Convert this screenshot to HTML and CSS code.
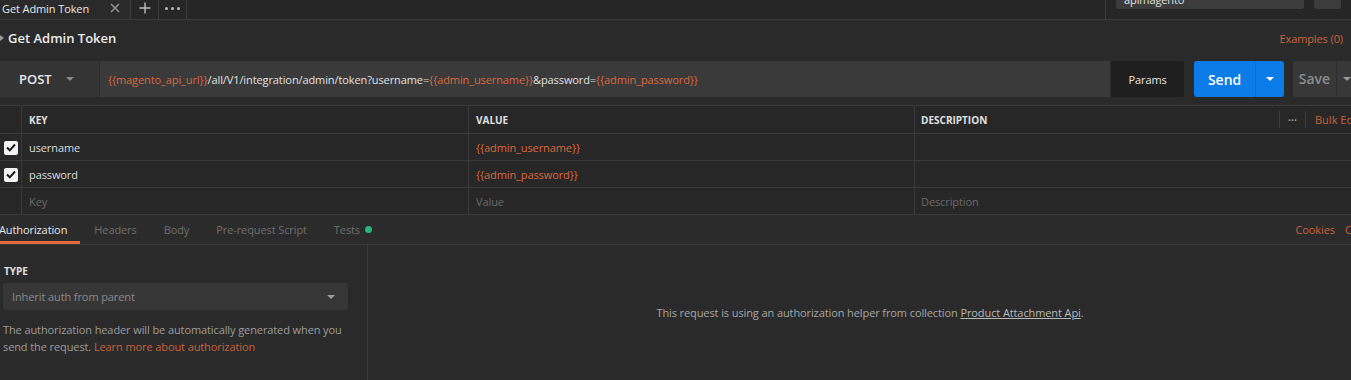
FILE: index.html
```html
<!DOCTYPE html>
<html>
<head>
<meta charset="utf-8">
<link rel="stylesheet" href="styles.css">
</head>
<body>
<div class="topbar">
  <div class="tab">
    <span class="tab-name">Get Admin Token</span>
    <svg class="tab-close" width="10" height="10" viewBox="0 0 10 10"><path d="M1 1L9 9M9 1L1 9" stroke="#9a9a9a" stroke-width="1.4"/></svg>
  </div>
  <div class="tab-btn">
    <svg width="12" height="12" viewBox="0 0 12 12"><path d="M6 0.5V11.5M0.5 6H11.5" stroke="#bdbdbd" stroke-width="1.4"/></svg>
  </div>
  <div class="tab-btn dots">
    <span></span><span></span><span></span>
  </div>
  <div class="spacer"></div>
  <div class="env-area">
    <div class="env-select">apimagento</div>
    <div class="env-btn"></div>
  </div>
</div>

<div class="title-row">
  <div class="title"><span class="caret"></span>Get Admin Token</div>
  <div class="examples">Examples (0)</div>
</div>

<div class="url-row">
  <div class="method">POST <span class="tri"></span></div>
  <div class="url"><span class="var">{{magento_api_url}}</span>/all/V1/integration/admin/token?username=<span class="var">{{admin_username}}</span>&amp;password=<span class="var">{{admin_password}}</span></div>
  <div class="params">Params</div>
  <div class="send"><span class="send-label">Send</span><span class="send-drop"><span class="tri white"></span></span></div>
  <div class="save"><span class="save-label">Save</span><span class="tri grey"></span></div>
</div>

<div class="table">
  <div class="row head">
    <div class="c-check"></div>
    <div class="c-key">KEY</div>
    <div class="c-val">VALUE</div>
    <div class="c-desc">DESCRIPTION
      <div class="head-tools"><span class="sep"></span><span class="more">•••</span><span class="sep"></span><span class="bulk">Bulk Edit</span></div>
    </div>
  </div>
  <div class="row">
    <div class="c-check"><span class="cb"><svg width="10" height="9" viewBox="0 0 10 9"><path d="M1 4.5L3.8 7.3L9 1.5" fill="none" stroke="#1a1a1a" stroke-width="2"/></svg></span></div>
    <div class="c-key">username</div>
    <div class="c-val var">{{admin_username}}</div>
    <div class="c-desc"></div>
  </div>
  <div class="row">
    <div class="c-check"><span class="cb"><svg width="10" height="9" viewBox="0 0 10 9"><path d="M1 4.5L3.8 7.3L9 1.5" fill="none" stroke="#1a1a1a" stroke-width="2"/></svg></span></div>
    <div class="c-key">password</div>
    <div class="c-val var">{{admin_password}}</div>
    <div class="c-desc"></div>
  </div>
  <div class="row">
    <div class="c-check"></div>
    <div class="c-key ph">Key</div>
    <div class="c-val ph">Value</div>
    <div class="c-desc ph">Description</div>
  </div>
</div>

<div class="tabs">
  <div class="t active">Authorization</div>
  <div class="t">Headers</div>
  <div class="t">Body</div>
  <div class="t">Pre-request Script</div>
  <div class="t">Tests <span class="dot"></span></div>
  <div class="spacer"></div>
  <div class="t link">Cookies</div>
  <div class="t link last">Code</div>
</div>

<div class="auth">
  <div class="auth-left">
    <div class="type-label">TYPE</div>
    <div class="select"><span>Inherit auth from parent</span><span class="tri grey"></span></div>
    <p class="help">The authorization header will be automatically generated when you send the request. <span class="link">Learn more about authorization</span></p>
  </div>
  <div class="auth-right">
    <p class="info">This request is using an authorization helper from collection <span class="u">Product Attachment Api</span>.</p>
  </div>
</div>
</body>
</html>
```

FILE: styles.css
```css
* { box-sizing: border-box; }
html, body { margin: 0; padding: 0; }
body {
  width: 1351px;
  height: 380px;
  overflow: hidden;
  background: #2a2a2a;
  font-family: "Open Sans", "Liberation Sans", sans-serif;
  font-size: 11px;
  letter-spacing: -0.1px;
  color: #dcdcdc;
}
.spacer { flex: 1; }
.var { color: #d9693f; }

.topbar {
  height: 20px;
  display: flex;
  background: #262626;
  border-bottom: 1px solid #3a3a3a;
}
.tab {
  width: 131px;
  display: flex;
  align-items: center;
  justify-content: space-between;
  padding: 0 10px 0 2px;
  border-right: 1px solid #3c3c3c;
  background: #2a2a2a;
}
.tab-name { font-size: 11px; color: #e6e6e6; line-height: 14px; margin-top: -2px; }
.tab-close { margin-top: -4px; }
.tab-btn {
  width: 28px;
  display: flex;
  align-items: center;
  justify-content: center;
  border-right: 1px solid #3c3c3c;
  padding-bottom: 3px;
}
.dots { gap: 3px; }
.dots span { width: 3px; height: 3px; border-radius: 50%; background: #bdbdbd; }
.env-area {
  width: 246px;
  border-left: 1px solid #3c3c3c;
  display: flex;
  align-items: flex-start;
  padding-left: 10px;
  gap: 10px;
}
.env-select {
  width: 188px;
  height: 9px;
  background: #3c3c3c;
  border-radius: 0 0 3px 3px;
  color: #e0e0e0;
  font-size: 11px;
  line-height: 0;
  padding-left: 8px;
  overflow: hidden;
}
.env-btn {
  width: 27px;
  height: 9px;
  background: #3c3c3c;
  border-radius: 0 0 3px 3px;
}

.title-row {
  height: 40px;
  display: flex;
  align-items: center;
  justify-content: space-between;
  padding-right: 8px;
}
.title {
  font-size: 13px;
  font-weight: 600;
  letter-spacing: 0;
  color: #ececec;
  display: flex;
  align-items: center;
  gap: 4px;
  margin-top: -4px;
}
.caret {
  width: 0; height: 0;
  border-top: 3.5px solid transparent;
  border-bottom: 3.5px solid transparent;
  border-left: 4px solid #9a9a9a;
}
.examples { color: #c8623e; font-size: 11px; margin-top: -4px; }

.url-row {
  margin-top: 1px;
  height: 36px;
  display: flex;
}
.method {
  width: 100px;
  background: #343434;
  display: flex;
  align-items: center;
  padding-left: 19px;
  gap: 14px;
  font-size: 13px;
  font-weight: 600;
  letter-spacing: 0;
  color: #e8e8e8;
  border-right: 1px solid #2d2d2d;
}
.tri {
  display: inline-block;
  width: 0; height: 0;
  border-left: 4px solid transparent;
  border-right: 4px solid transparent;
  border-top: 4px solid #8a8a8a;
}
.tri.white { border-top-color: #ffffff; }
.tri.grey { border-top-color: #9a9a9a; }
.url {
  width: 1011px;
  background: #3a3a3a;
  display: flex;
  align-items: center;
  padding-left: 8px;
  font-size: 11px;
  color: #e0e0e0;
  white-space: pre;
}
.params {
  width: 73px;
  margin-left: 1px;
  background: #1f1f1f;
  border-radius: 2px;
  display: flex;
  align-items: center;
  justify-content: center;
  font-size: 11px;
  color: #e6e6e6;
}
.send {
  width: 90px;
  margin-left: 10px;
  background: #0b7be8;
  border-radius: 3px;
  display: flex;
  color: #fff;
}
.send-label {
  width: 62px;
  display: flex;
  align-items: center;
  justify-content: center;
  font-size: 14px;
  font-weight: 600;
  letter-spacing: 0;
  border-right: 1px solid #0a6bcc;
}
.send-drop {
  flex: 1;
  display: flex;
  align-items: center;
  justify-content: center;
}
.save {
  width: 58px;
  margin-left: 9px;
  background: #383838;
  border-radius: 3px 0 0 3px;
  display: flex;
  align-items: center;
  color: #8c8c8c;
  font-size: 14px;
  font-weight: 600;
  letter-spacing: 0;
}
.save-label {
  width: 44px;
  text-align: center;
  border-right: 1px solid #2e2e2e;
  line-height: 36px;
  margin-right: 6px;
}

.table {
  margin-top: 8px;
  background: #272727;
  border-top: 1px solid #3a3a3a;
}
.row {
  display: flex;
  height: 27px;
  border-bottom: 1px solid #3a3a3a;
}
.row.head { height: 28px; }
.row > div {
  display: flex;
  align-items: center;
  border-right: 1px solid #3a3a3a;
  padding-left: 7px;
}
.row:not(.head) > div { padding-top: 1px; }
.c-check { width: 22px; padding-left: 4px !important; }
.c-key { width: 447px; }
.c-val { width: 446px; }
.c-desc { flex: 1; border-right: none !important; position: relative; padding-left: 6px !important; }
.head > div { font-size: 10px; font-weight: 700; color: #e0e0e0; letter-spacing: 0; }
.row:not(.head) > div { font-size: 11px; }
.ph { color: #6a6a6a; }
.cb {
  width: 14px; height: 14px;
  background: #f2f2f2;
  border-radius: 2px;
  display: flex;
  align-items: center;
  justify-content: center;
}
.head-tools {
  position: absolute;
  right: 0;
  top: 0;
  height: 27px;
  display: flex;
  align-items: center;
  font-weight: 400;
}
.head-tools .sep { width: 1px; height: 17px; background: #3c3c3c; }
.head-tools .more { color: #9a9a9a; font-size: 8px; letter-spacing: 0; padding: 0 8px; }
.head-tools .bulk { color: #c8623e; font-size: 11px; padding-left: 9px; width: 45px; overflow: hidden; white-space: nowrap; }

.tabs {
  height: 30px;
  display: flex;
  align-items: stretch;
  background: #2b2b2b;
  border-bottom: 1px solid #3a3a3a;
}
.t {
  display: flex;
  align-items: center;
  color: #6e6e6e;
  font-size: 11px;
  margin-right: 27px;
  padding-top: 0;
  gap: 5px;
}
.t.active {
  color: #e6e6e6;
  margin-left: -1px;
  padding-right: 13px;
  margin-right: 14px;
  border-bottom: 3px solid #e0693f;
  padding-top: 3px;
}
.t .dot { width: 7px; height: 7px; border-radius: 50%; background: #25b77c; }
.t.link { color: #c8623e; margin-right: 10px; }
.t.last { margin-right: -20px; }

.auth {
  display: flex;
  height: 135px;
}
.auth-left {
  width: 368px;
  border-right: 1px solid #3a3a3a;
  padding: 18px 17px 0 3px;
}
.type-label {
  font-size: 10px;
  font-weight: 700;
  letter-spacing: 0;
  color: #e0e0e0;
  margin-left: 1px;
  line-height: 16px;
}
.select {
  margin-top: 4px;
  margin-right: 2px;
  height: 27px;
  background: #363636;
  border-radius: 3px;
  display: flex;
  align-items: center;
  justify-content: space-between;
  padding: 0 13px 0 9px;
  color: #8a8a8a;
  font-size: 11px;
}
.help {
  margin: 11px 0 0 0;
  font-size: 11px;
  line-height: 17px;
  color: #9c9c9c;
}
.link { color: #c8623e; }
.auth-right {
  flex: 1;
  display: flex;
  justify-content: center;
  padding-top: 60px;
}
.info {
  margin: 0;
  font-size: 11px;
  color: #a6a6a6;
  padding-left: 21px;
}
.u { text-decoration: underline; color: #b8b8b8; }
```
